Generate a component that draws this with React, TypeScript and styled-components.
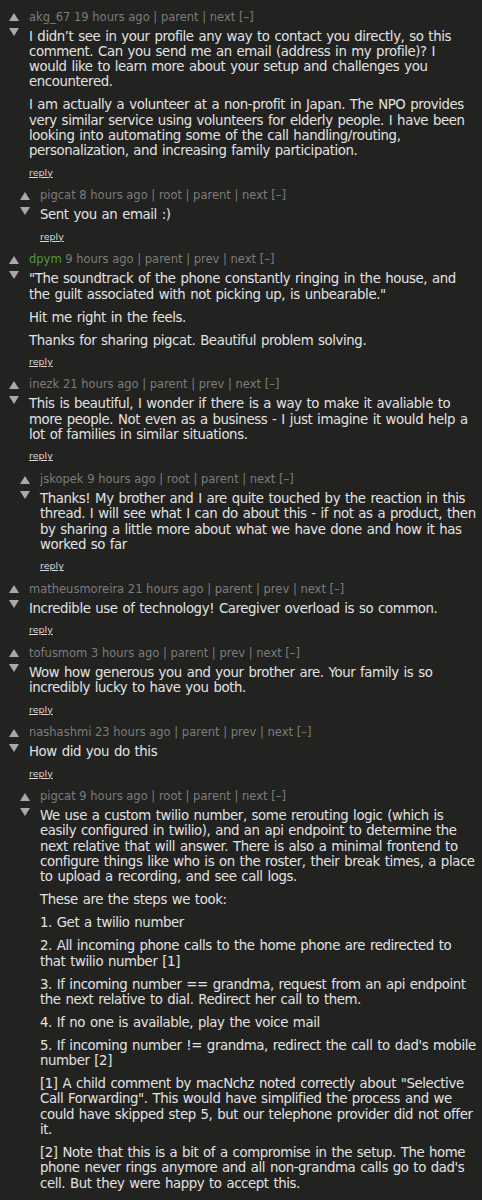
import { createGlobalStyle, styled } from "styled-components";

const GlobalStyle = createGlobalStyle`
  html, body {
    margin: 0;
    padding: 0;
    background: #222220;
  }
  body {
    font-family: Verdana, "DejaVu Sans", sans-serif;
    color: #dcdcdc;
  }
`;

const Thread = styled.div`
  display: flex;
  flex-direction: column;
  gap: 10.7px;
  padding: 10.5px 4.6px 0 9px;
`;

const CommentRow = styled.div<{ $indent: number }>`
  display: flex;
  gap: 10px;
  padding-left: ${(p) => p.$indent * 11}px;
`;

const Votes = styled.div`
  display: flex;
  flex-direction: column;
  gap: 7px;
  padding-top: 2.5px;
  flex-shrink: 0;
`;

const Arrow = styled.svg`
  display: block;
  width: 10px;
  height: 8px;
  fill: #a9a9a9;
`;

const Body = styled.div`
  flex: 1;
  min-width: 0;
`;

const Meta = styled.div`
  font-size: 11.5px;
  line-height: 13px;
  color: #7c7c7c;
  white-space: nowrap;
`;

const User = styled.span<{ $fresh?: boolean }>`
  color: ${(p) => (p.$fresh ? "#4f9a3c" : "#7c7c7c")};
`;

/* verdana-ish spacing: wider spaces, tighter letters */
const Text = styled.div`
  font-size: 13.3px;
  letter-spacing: -0.4px;
  word-spacing: 1px;
  line-height: 15.3px;
  margin-top: 5px;
  color: #e2e2e2;

  p {
    margin: 0;
  }
  p + p {
    margin-top: 7.7px;
  }
`;

const Reply = styled.div`
  font-size: 9.5px;
  line-height: 13px;
  margin-top: 7px;
  color: #d8d8d8;
  text-decoration: underline;
`;

type CommentData = {
  user: string;
  age: string;
  links: string[];
  indent: number;
  fresh?: boolean;
  paras: string[];
};

const comments: CommentData[] = [
  {
    user: "akg_67",
    age: "19 hours ago",
    links: ["parent", "next"],
    indent: 0,
    paras: [
      "I didn\u2019t see in your profile any way to contact you directly, so this comment. Can you send me an email (address in my profile)? I would like to learn more about your setup and challenges you encountered.",
      "I am actually a volunteer at a non-profit in Japan. The NPO provides very similar service using volunteers for elderly people. I have been looking into automating some of the call handling/routing, personalization, and increasing family participation.",
    ],
  },
  {
    user: "pigcat",
    age: "8 hours ago",
    links: ["root", "parent", "next"],
    indent: 1,
    paras: ["Sent you an email :)"],
  },
  {
    user: "dpym",
    age: "9 hours ago",
    links: ["parent", "prev", "next"],
    indent: 0,
    fresh: true,
    paras: [
      "\"The soundtrack of the phone constantly ringing in the house, and the guilt associated with not picking up, is unbearable.\"",
      "Hit me right in the feels.",
      "Thanks for sharing pigcat. Beautiful problem solving.",
    ],
  },
  {
    user: "inezk",
    age: "21 hours ago",
    links: ["parent", "prev", "next"],
    indent: 0,
    paras: [
      "This is beautiful, I wonder if there is a way to make it avaliable to more people. Not even as a business - I just imagine it would help a lot of families in similar situations.",
    ],
  },
  {
    user: "jskopek",
    age: "9 hours ago",
    links: ["root", "parent", "next"],
    indent: 1,
    paras: [
      "Thanks! My brother and I are quite touched by the reaction in this thread. I will see what I can do about this - if not as a product, then by sharing a little more about what we have done and how it has worked so far",
    ],
  },
  {
    user: "matheusmoreira",
    age: "21 hours ago",
    links: ["parent", "prev", "next"],
    indent: 0,
    paras: ["Incredible use of technology! Caregiver overload is so common."],
  },
  {
    user: "tofusmom",
    age: "3 hours ago",
    links: ["parent", "prev", "next"],
    indent: 0,
    paras: [
      "Wow how generous you and your brother are. Your family is so incredibly lucky to have you both.",
    ],
  },
  {
    user: "nashashmi",
    age: "23 hours ago",
    links: ["parent", "prev", "next"],
    indent: 0,
    paras: ["How did you do this"],
  },
  {
    user: "pigcat",
    age: "9 hours ago",
    links: ["root", "parent", "next"],
    indent: 1,
    paras: [
      "We use a custom twilio number, some rerouting logic (which is easily configured in twilio), and an api endpoint to determine the next relative that will answer. There is also a minimal frontend to configure things like who is on the roster, their break times, a place to upload a recording, and see call logs.",
      "These are the steps we took:",
      "1. Get a twilio number",
      "2. All incoming phone calls to the home phone are redirected to that twilio number [1]",
      "3. If incoming number == grandma, request from an api endpoint the next relative to dial. Redirect her call to them.",
      "4. If no one is available, play the voice mail",
      "5. If incoming number != grandma, redirect the call to dad's mobile number [2]",
      "[1] A child comment by macNchz noted correctly about \"Selective Call Forwarding\". This would have simplified the process and we could have skipped step 5, but our telephone provider did not offer it.",
      "[2] Note that this is a bit of a compromise in the setup. The home phone never rings anymore and all non-grandma calls go to dad's cell. But they were happy to accept this.",
    ],
  },
];

const UpArrow = () => (
  <Arrow viewBox="0 0 10 8">
    <polygon points="5,0 10,8 0,8" />
  </Arrow>
);

const DownArrow = () => (
  <Arrow viewBox="0 0 10 8">
    <polygon points="0,0 10,0 5,8" />
  </Arrow>
);

const Comment = ({ c }: { c: CommentData }) => (
  <CommentRow $indent={c.indent}>
    <Votes>
      <UpArrow />
      <DownArrow />
    </Votes>
    <Body>
      <Meta>
        <User $fresh={c.fresh}>{c.user}</User> {c.age} | {c.links.join(" | ")} [–]
      </Meta>
      <Text>
        {c.paras.map((p, i) => (
          <p key={i}>{p}</p>
        ))}
      </Text>
      <Reply>reply</Reply>
    </Body>
  </CommentRow>
);

export default function App() {
  return (
    <>
      <GlobalStyle />
      <Thread>
        {comments.map((c, i) => (
          <Comment key={i} c={c} />
        ))}
      </Thread>
    </>
  );
}
